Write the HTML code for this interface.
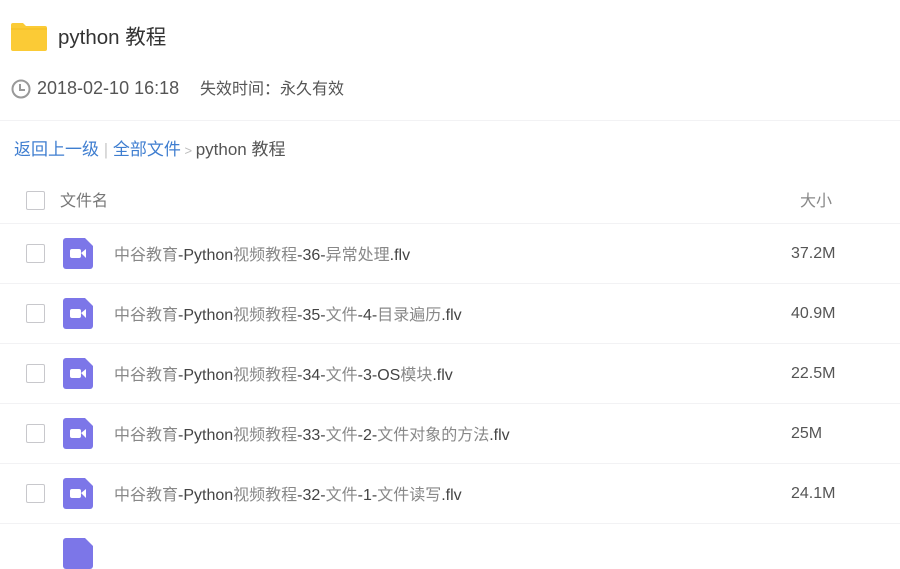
<!DOCTYPE html>
<html><head><meta charset="utf-8"><style>
*{margin:0;padding:0;box-sizing:border-box}
body{width:900px;height:545px;overflow:hidden;background:#fff;font-family:"Liberation Sans","Noto Sans CJK SC",sans-serif;position:relative;color:#333;line-height:20px}
.a{position:absolute;white-space:nowrap}
.line{position:absolute;left:0;width:900px;height:1px;background:#f2f2f4}
.cb{position:absolute;left:26px;width:19px;height:19px;border:1px solid #c8c8cc;border-radius:2px;background:#fff}
.name{position:absolute;left:114px;font-size:16px;color:#888;white-space:nowrap;line-height:20px}
.name b{font-weight:normal;color:#444}
.size{position:absolute;left:791px;font-size:16px;color:#555;line-height:20px}
</style></head><body>
<svg class="a" style="left:11px;top:23px" width="36" height="28" viewBox="0 0 36 28"><path d="M2 0h10l3 3h19a2 2 0 0 1 2 2v21a2 2 0 0 1-2 2H2a2 2 0 0 1-2-2V2a2 2 0 0 1 2-2z" fill="#fbcb36"/><path d="M0 6h36" stroke="#f5bd1f" stroke-width="1"/></svg>
<div class="a" style="left:58px;top:26px;font-size:20.5px;line-height:24px;color:#333">python 教程</div>
<svg class="a" style="left:11px;top:79px" width="20" height="20" viewBox="0 0 20 20"><circle cx="10" cy="10" r="8.5" fill="none" stroke="#999" stroke-width="2"/><path d="M9 5v6h5" fill="none" stroke="#999" stroke-width="2"/></svg>
<div class="a" style="left:37px;top:78px;font-size:18px;color:#555">2018-02-10 16:18</div>
<div class="a" style="left:200px;top:80px;font-size:16px;color:#555">失效时间：永久有效</div>
<div class="line" style="top:120px"></div>
<div class="a" style="left:14px;top:140px;font-size:17px;color:#3f7ed0">返回上一级<span style="color:#ccc"> | </span>全部文件<span style="color:#bbb;font-size:13px"> &gt; </span><span style="color:#555">python 教程</span></div>
<div class="cb" style="top:191px"></div>
<div class="a" style="left:60px;top:192px;font-size:16px;color:#777">文件名</div>
<div class="a" style="left:800px;top:192px;font-size:16px;color:#888">大小</div>
<div class="line" style="top:223px"></div>
<div class="cb" style="top:244px"></div><svg class="a" style="left:63px;top:238px" width="30" height="31" viewBox="0 0 30 31"><path d="M3 0h19l8 8v20a3 3 0 0 1-3 3H3a3 3 0 0 1-3-3V3a3 3 0 0 1 3-3z" fill="#7c76e8"/><rect x="7" y="11" width="11" height="9" rx="2" fill="#fff"/><path d="M18 15l5-4v9z" fill="#fff"/></svg><div class="name" style="top:246px">中谷教育<b>-Python</b>视频教程<b>-36-</b>异常处理<b>.flv</b></div><div class="size" style="top:244px">37.2M</div><div class="line" style="top:283px"></div>
<div class="cb" style="top:304px"></div><svg class="a" style="left:63px;top:298px" width="30" height="31" viewBox="0 0 30 31"><path d="M3 0h19l8 8v20a3 3 0 0 1-3 3H3a3 3 0 0 1-3-3V3a3 3 0 0 1 3-3z" fill="#7c76e8"/><rect x="7" y="11" width="11" height="9" rx="2" fill="#fff"/><path d="M18 15l5-4v9z" fill="#fff"/></svg><div class="name" style="top:306px">中谷教育<b>-Python</b>视频教程<b>-35-</b>文件<b>-4-</b>目录遍历<b>.flv</b></div><div class="size" style="top:304px">40.9M</div><div class="line" style="top:343px"></div>
<div class="cb" style="top:364px"></div><svg class="a" style="left:63px;top:358px" width="30" height="31" viewBox="0 0 30 31"><path d="M3 0h19l8 8v20a3 3 0 0 1-3 3H3a3 3 0 0 1-3-3V3a3 3 0 0 1 3-3z" fill="#7c76e8"/><rect x="7" y="11" width="11" height="9" rx="2" fill="#fff"/><path d="M18 15l5-4v9z" fill="#fff"/></svg><div class="name" style="top:366px">中谷教育<b>-Python</b>视频教程<b>-34-</b>文件<b>-3-OS</b>模块<b>.flv</b></div><div class="size" style="top:364px">22.5M</div><div class="line" style="top:403px"></div>
<div class="cb" style="top:424px"></div><svg class="a" style="left:63px;top:418px" width="30" height="31" viewBox="0 0 30 31"><path d="M3 0h19l8 8v20a3 3 0 0 1-3 3H3a3 3 0 0 1-3-3V3a3 3 0 0 1 3-3z" fill="#7c76e8"/><rect x="7" y="11" width="11" height="9" rx="2" fill="#fff"/><path d="M18 15l5-4v9z" fill="#fff"/></svg><div class="name" style="top:426px">中谷教育<b>-Python</b>视频教程<b>-33-</b>文件<b>-2-</b>文件对象的方法<b>.flv</b></div><div class="size" style="top:424px">25M</div><div class="line" style="top:463px"></div>
<div class="cb" style="top:484px"></div><svg class="a" style="left:63px;top:478px" width="30" height="31" viewBox="0 0 30 31"><path d="M3 0h19l8 8v20a3 3 0 0 1-3 3H3a3 3 0 0 1-3-3V3a3 3 0 0 1 3-3z" fill="#7c76e8"/><rect x="7" y="11" width="11" height="9" rx="2" fill="#fff"/><path d="M18 15l5-4v9z" fill="#fff"/></svg><div class="name" style="top:486px">中谷教育<b>-Python</b>视频教程<b>-32-</b>文件<b>-1-</b>文件读写<b>.flv</b></div><div class="size" style="top:484px">24.1M</div><div class="line" style="top:523px"></div>
<svg class="a" style="left:63px;top:538px" width="30" height="31" viewBox="0 0 30 31"><path d="M3 0h19l8 8v20a3 3 0 0 1-3 3H3a3 3 0 0 1-3-3V3a3 3 0 0 1 3-3z" fill="#7c76e8"/></svg>
</body></html>
